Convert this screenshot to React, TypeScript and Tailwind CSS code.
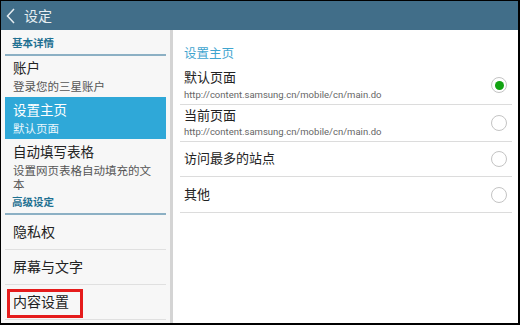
import React from "react";

const font = { fontFamily: 'Roboto, "Noto Sans CJK SC", sans-serif' };

function Radio({ checked }: { checked?: boolean }) {
  return (
    <div className="w-[16px] h-[16px] rounded-full border-[1.5px] border-[#c4c4c4] bg-white flex items-center justify-center shrink-0">
      {checked && <div className="w-[9px] h-[9px] rounded-full bg-[#12a312]" />}
    </div>
  );
}

function SectionHeader({ label, h }: { label: string; h: string }) {
  return (
    <div className={`${h} flex items-end pl-[7px] pb-[3px] border-b-2 border-[#8cb0c4]`}>
      <span className="text-[10.5px] leading-[14px] font-bold text-[#1f7192]">{label}</span>
    </div>
  );
}

function SimpleItem({ label, boxed }: { label: string; boxed?: boolean }) {
  return (
    <div className="relative h-[35px] flex items-center pl-[8px] border-b border-[#e0e0e0]">
      <span className="text-[14px] leading-[18px] text-[#222]">{label}</span>
      {boxed && (
        <div className="absolute left-[2px] top-[4px] w-[76px] h-[29px] border-[3px] border-[#e51c1c]" />
      )}
    </div>
  );
}

export default function App() {
  return (
    <div className="w-[520px] h-[325px] bg-black pl-px pt-px pr-[2px] pb-[2px]" style={font}>
      <div className="w-full h-full bg-white flex flex-col">
        <div className="h-[29px] bg-[#416e89] flex items-center shrink-0">
          <svg width="10" height="16" viewBox="0 0 10 16" className="ml-[5px]">
            <path d="M8 1 L1.5 8 L8 15" fill="none" stroke="#e6edf1" strokeWidth="1.5" />
          </svg>
          <span className="ml-[8px] text-[14px] leading-[18px] text-[#e8eef2]">设定</span>
        </div>
        <div className="flex flex-1 min-h-0">
          <div className="w-[169px] bg-[#f7f7f7] px-[4px] shrink-0">
            <SectionHeader label="基本详情" h="h-[26px]" />
            <div className="h-[41px] pl-[8px] pt-[3px]">
              <div className="text-[13.5px] leading-[18px] text-[#222]">账户</div>
              <div className="mt-[2px] text-[11.5px] leading-[16px] text-[#555]">登录您的三星账户</div>
            </div>
            <div className="h-[42px] pl-[8px] pt-[4px] bg-[#2fa8d8]">
              <div className="text-[13.5px] leading-[18px] text-white">设置主页</div>
              <div className="mt-[2px] text-[11.5px] leading-[16px] text-[#e8f6fc]">默认页面</div>
            </div>
            <div className="h-[54px] pl-[8px] pt-[4px]">
              <div className="text-[13.5px] leading-[18px] text-[#222]">自动填写表格</div>
              <div className="mt-[3px] text-[11.5px] leading-[14px] text-[#555] pr-[12px]">
                设置网页表格自动填充的文本
              </div>
            </div>
            <SectionHeader label="高级设定" h="h-[22px]" />
            <SimpleItem label="隐私权" />
            <SimpleItem label="屏幕与文字" />
            <SimpleItem label="内容设置" boxed />
          </div>
          <div className="w-[3px] bg-[#d4d4d4] shrink-0" />
          <div className="flex-1 pl-[7px] pr-[6px]">
            <div className="pt-[16px] pb-[4px] pl-[4px]">
              <div className="text-[12.5px] leading-[16px] text-[#3fa5cf]">设置主页</div>
            </div>
            <div className="h-[39px] flex items-center justify-between pl-[4px] pr-[5px] border-b border-[#dcdcdc]">
              <div>
                <div className="text-[13px] leading-[18px] text-[#222]">默认页面</div>
                <div className="mt-px text-[9.5px] leading-[14px] text-[#666]">http://content.samsung.cn/mobile/cn/main.do</div>
              </div>
              <Radio checked />
            </div>
            <div className="h-[37px] flex items-center justify-between pl-[4px] pr-[5px] border-b border-[#dcdcdc]">
              <div>
                <div className="text-[13px] leading-[18px] text-[#222]">当前页面</div>
                <div className="text-[9.5px] leading-[14px] text-[#666]">http://content.samsung.cn/mobile/cn/main.do</div>
              </div>
              <Radio />
            </div>
            <div className="h-[35px] flex items-center justify-between pl-[4px] pr-[5px] border-b border-[#dcdcdc]">
              <div className="text-[13px] leading-[18px] text-[#222]">访问最多的站点</div>
              <Radio />
            </div>
            <div className="h-[36px] flex items-center justify-between pl-[4px] pr-[5px] border-b border-[#dcdcdc]">
              <div className="text-[13px] leading-[18px] text-[#222]">其他</div>
              <Radio />
            </div>
          </div>
        </div>
      </div>
    </div>
  );
}
